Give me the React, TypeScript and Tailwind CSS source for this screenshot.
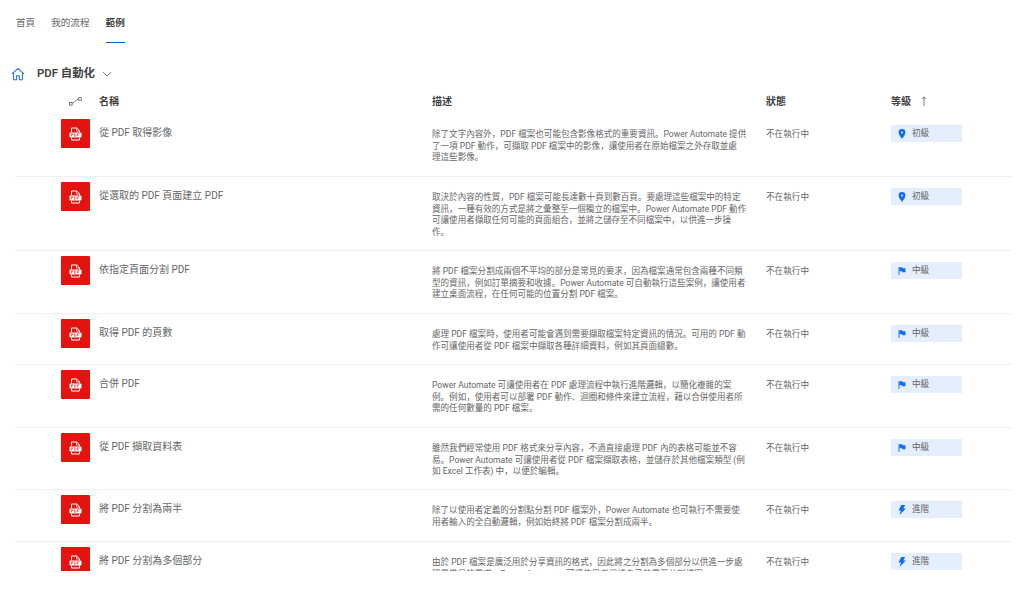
import React from 'react';

type Level = 'beginner' | 'middle' | 'advanced';

interface Flow {
  name: string;
  desc: string;
  level: Level;
  height: string;
}

const flows: Flow[] = [
  {
    name: '從 PDF 取得影像',
    desc: '除了文字內容外，PDF 檔案也可能包含影像格式的重要資訊。Power Automate 提供了一項 PDF 動作，可擷取 PDF 檔案中的影像，讓使用者在原始檔案之外存取並處\n理這些影像。',
    level: 'beginner',
    height: 'h-[63px]',
  },
  {
    name: '從選取的 PDF 頁面建立 PDF',
    desc: '取決於內容的性質，PDF 檔案可能長達數十頁到數百頁。要處理這些檔案中的特定資訊，一種有效的方式是將之彙整至一個獨立的檔案中。Power Automate PDF 動作可讓使用者擷取任何可能的頁面組合，並將之儲存至不同檔案中，以供進一步操作。',
    level: 'beginner',
    height: 'h-[74px]',
  },
  {
    name: '依指定頁面分割 PDF',
    desc: '將 PDF 檔案分割成兩個不平均的部分是常見的要求，因為檔案通常包含兩種不同類型的資訊，例如訂單摘要和收據。Power Automate 可自動執行這些案例，讓使用者建立桌面流程，在任何可能的位置分割 PDF 檔案。',
    level: 'middle',
    height: 'h-[63px]',
  },
  {
    name: '取得 PDF 的頁數',
    desc: '處理 PDF 檔案時，使用者可能會遇到需要擷取檔案特定資訊的情況。可用的 PDF 動作可讓使用者從 PDF 檔案中擷取各種詳細資料，例如其頁面總數。',
    level: 'middle',
    height: 'h-[51px]',
  },
  {
    name: '合併 PDF',
    desc: 'Power Automate 可讓使用者在 PDF 處理流程中執行進階邏輯，以簡化複雜的案例。例如，使用者可以部署 PDF 動作、迴圈和條件來建立流程，藉以合併使用者所需的任何數量的 PDF 檔案。',
    level: 'middle',
    height: 'h-[63px]',
  },
  {
    name: '從 PDF 擷取資料表',
    desc: '雖然我們經常使用 PDF 格式來分享內容，不過直接處理 PDF 內的表格可能並不容易。Power Automate 可讓使用者從 PDF 檔案擷取表格，並儲存於其他檔案類型 (例如 Excel 工作表) 中，以便於編輯。',
    level: 'middle',
    height: 'h-[62px]',
  },
  {
    name: '將 PDF 分割為兩半',
    desc: '除了以使用者定義的分割點分割 PDF 檔案外，Power Automate 也可執行不需要使用者輸入的全自動邏輯，例如始終將 PDF 檔案分割成兩半。',
    level: 'advanced',
    height: 'h-[52px]',
  },
  {
    name: '將 PDF 分割為多個部分',
    desc: '由於 PDF 檔案是廣泛用於分享資訊的格式，因此將之分割為多個部分以供進一步處理是常見的需求。Power Automate 可讓使用者根據自己的需要分割檔案。',
    level: 'advanced',
    height: 'h-[62px]',
  },
];

const levelLabels: Record<Level, string> = {
  beginner: '初級',
  middle: '中級',
  advanced: '進階',
};

function LevelIcon({ level }: { level: Level }) {
  if (level === 'beginner') {
    return (
      <svg width="8" height="10" viewBox="0 0 8 10" fill="#0f6cf2">
        <path fillRule="evenodd" d="M4 0a3.4 3.4 0 0 1 3.4 3.4C7.4 5.6 5 8.2 4 10 3 8.2.6 5.6.6 3.4A3.4 3.4 0 0 1 4 0Zm0 2.4a1 1 0 1 0 0 2 1 1 0 0 0 0-2Z" />
      </svg>
    );
  }
  if (level === 'middle') {
    return (
      <svg width="9" height="10" viewBox="0 0 9 10" fill="#0f6cf2">
        <path d="M0.6 0.5h1v9h-1z" />
        <path d="M1.6 0.8h3.4v1h3.4v4.6H4.8v-1H1.6z" />
      </svg>
    );
  }
  return (
    <svg width="8" height="10" viewBox="0 0 8 10" fill="#0f6cf2">
      <path d="M3.2 0h3.9L5.4 3.5h2.4L1.6 10l1.3-4.6H.6z" />
    </svg>
  );
}

function PdfIcon() {
  return (
    <svg width="13" height="14" viewBox="0 0 13 14" fill="none">
      <path d="M2.5 5.5V1h5.2l2.8 2.8v1.7M2.5 10.5V13h8v-2.5" stroke="#fff" strokeWidth="1" />
      <path d="M7.5 1v3h3" stroke="#fff" strokeWidth="0.7" />
      <rect x="0.5" y="5.5" width="12" height="5" rx="1" fill="#fff" />
      <path d="M2.4 9.4V6.6h1.3v1.4H2.4M5.4 9.4V6.6h.8l.7.7v1.4l-.7.7zM8.6 9.4V6.6h1.8M8.6 8h1.4" stroke="#e3140f" strokeWidth="0.55" />
    </svg>
  );
}

function FlowRow({ flow }: { flow: Flow }) {
  return (
    <div className={`flex pl-[46px] border-b border-[#f0f0f0] ${flow.height}`}>
      <div className="w-[38px] pt-[5px] shrink-0">
        <div className="w-[29px] h-[29px] bg-[#e3140f] rounded-[1px] flex items-center justify-center">
          <PdfIcon />
        </div>
      </div>
      <div className="w-[333px] shrink-0 pt-[12px] text-[10px] leading-[14px] text-[#666666]">{flow.name}</div>
      <div className="w-[334px] shrink-0 pt-[15px] pr-[19px] whitespace-pre-line text-[8.55px] leading-[11.5px] text-[#666666]">{flow.desc}</div>
      <div className="w-[125px] shrink-0 pt-[15px] text-[8.6px] leading-[11.6px] text-[#666666]">不在執行中</div>
      <div className="pt-[11px]">
        <div className="w-[71px] h-[17px] bg-[#e4eefd] flex items-center pl-[7px] gap-[6px] text-[8.6px] text-[#666666]">
          <span className="w-[8px] flex justify-center"><LevelIcon level={flow.level} /></span>
          {levelLabels[flow.level]}
        </div>
      </div>
    </div>
  );
}

export default function App() {
  return (
    <div
      className="w-[1024px] h-[590px] bg-white overflow-hidden"
      style={{ fontFamily: 'Roboto, "Noto Sans CJK SC", sans-serif' }}
    >
      <div className="h-[571px] overflow-hidden">
        <nav className="flex gap-[16px] pl-[16px] h-[43px] pt-[16px] text-[9.6px] leading-[14px] text-[#666666]">
          <span>首頁</span>
          <span>我的流程</span>
          <span className="relative h-[27px] font-semibold text-[#424242]">
            範例
            <span className="absolute left-0 right-0 bottom-0 h-px bg-[#0f5fd0]" />
          </span>
        </nav>

        <div className="flex items-center h-[18px] mt-[22px] pl-[11px]">
          <svg width="14" height="14" viewBox="0 0 14 14" fill="none" stroke="#2f7bf0" strokeWidth="1.1">
            <path d="M1 7 7 1.4 13 7M2.6 5.8v6.9h3v-4h2.8v4h3V5.8" />
          </svg>
          <span className="ml-[12px] text-[11.4px] font-semibold text-[#424242]">PDF 自動化</span>
          <svg className="ml-[7px]" width="10" height="10" viewBox="0 0 10 10" fill="none" stroke="#616161" strokeWidth="0.8">
            <path d="M1 3l4 4 4-4" />
          </svg>
        </div>

        <div className="ml-[15px] w-[997px]">
          <div className="flex items-center h-[18px] mt-[9px] text-[10px] font-semibold text-[#424242] pl-[46px]">
            <div className="w-[38px] pl-[8px]">
              <svg width="13" height="9" viewBox="0 0 13 9" fill="none" stroke="#616161" strokeWidth="0.8">
                <rect x="0.5" y="5.5" width="2.6" height="2.6" />
                <rect x="9.7" y="0.6" width="2.6" height="2.6" />
                <path d="M3.2 6.2C5.6 6 6.4 2.4 9.6 2" />
              </svg>
            </div>
            <div className="w-[333px]">名稱</div>
            <div className="w-[334px]">描述</div>
            <div className="w-[125px]">狀態</div>
            <div className="flex items-center gap-[10px]">
              等級
              <svg width="6" height="10" viewBox="0 0 6 10" fill="none" stroke="#616161" strokeWidth="0.8">
                <path d="M3 10V1M.8 3 3 .8 5.2 3" />
              </svg>
            </div>
          </div>
          <div className="mt-[4px]">
            {flows.map((flow) => (
              <FlowRow key={flow.name} flow={flow} />
            ))}
          </div>
        </div>
      </div>
    </div>
  );
}
